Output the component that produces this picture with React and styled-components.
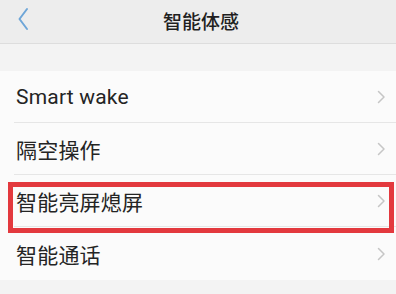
import React from 'react';
import styled, { createGlobalStyle } from 'styled-components';

const GlobalStyle = createGlobalStyle`
  html, body {
    margin: 0;
    padding: 0;
    background: #f3f3f3;
  }
  body {
    font-family: Roboto, "Noto Sans CJK SC", sans-serif;
    -webkit-font-smoothing: antialiased;
  }
`;

const items = [
  { label: 'Smart wake' },
  { label: '隔空操作' },
  { label: '智能亮屏熄屏', highlighted: true },
  { label: '智能通话' },
];

const BackIcon = () => (
  <svg width="12" height="24" viewBox="0 0 12 24" fill="none">
    <path d="M10 2 L2.5 12 L10 22" stroke="#6ea6d8" strokeWidth="2" strokeLinecap="round" strokeLinejoin="round" />
  </svg>
);

const ChevronIcon = () => (
  <svg width="9" height="14" viewBox="0 0 9 14" fill="none">
    <path d="M1.5 1.5 L7 7 L1.5 12.5" stroke="#c6c6c6" strokeWidth="1.5" strokeLinecap="round" strokeLinejoin="round" />
  </svg>
);

const App = () => {
  return (
    <>
      <GlobalStyle />
      <Page>
        <Header>
          <BackButton>
            <BackIcon />
          </BackButton>
          <Title>智能体感</Title>
        </Header>
        <List>
          {items.map((item, i) => (
            <Row key={item.label} $last={i === items.length - 1}>
              <Label>{item.label}</Label>
              <ChevronIcon />
              {item.highlighted && <Highlight />}
            </Row>
          ))}
        </List>
      </Page>
    </>
  );
};

const Page = styled('div')`
  display: flex;
  flex-direction: column;
  width: 396px;
  height: 294px;
  overflow: hidden;
  background: #f3f3f3;
`;

const Header = styled('div')`
  position: relative;
  display: flex;
  align-items: center;
  justify-content: center;
  height: 43px;
  background: #ededed;
  border-bottom: 1px solid #dddddd;
  flex-shrink: 0;
`;

const BackButton = styled('div')`
  position: absolute;
  left: 17px;
  top: 7px;
  display: flex;
`;

const Title = styled('div')`
  font-family: "Noto Sans CJK SC", sans-serif;
  font-size: 19px;
  font-weight: 500;
  color: #1f1f1f;
  margin-left: 6px;
  margin-top: -3px;
`;

const List = styled('div')`
  display: flex;
  flex-direction: column;
  margin-top: 27px;
  background: #fbfbfb;
`;

const Row = styled('div')`
  position: relative;
  display: flex;
  align-items: center;
  justify-content: space-between;
  height: 52px;
  padding: 0 10px 0 16px;
  box-sizing: border-box;

  &::after {
    content: '';
    display: ${(p) => (p.$last ? 'none' : 'block')};
    position: absolute;
    left: 14px;
    right: 0;
    bottom: 0;
    height: 1px;
    background: #e6e6e6;
  }

  &:last-child {
    height: 53px;
  }
`;

const Label = styled('div')`
  font-size: 21px;
  color: #242424;
  letter-spacing: 0.2px;
`;

const Highlight = styled('div')`
  position: absolute;
  left: 8px;
  right: 2px;
  top: 7px;
  height: 51px;
  box-sizing: border-box;
  border: 5px solid #e3393e;
  pointer-events: none;
  z-index: 2;
`;

export default App;
